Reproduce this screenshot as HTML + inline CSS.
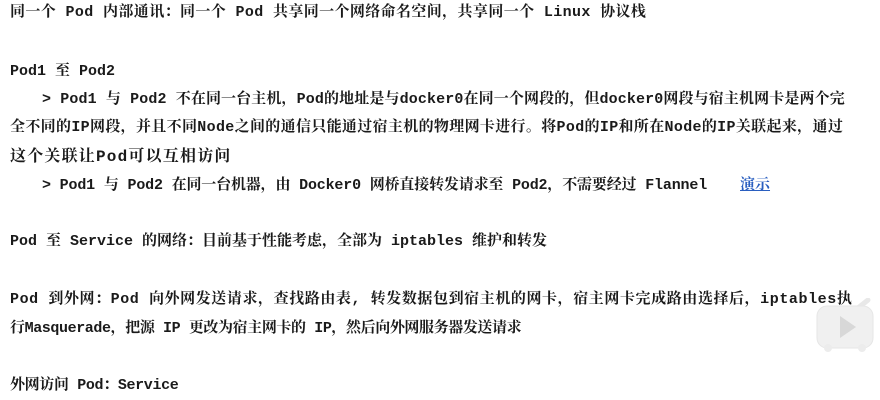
<!DOCTYPE html>
<html><head><meta charset="utf-8"><style>
body{margin:0;width:880px;height:400px;background:#fff;overflow:hidden;position:relative;}
.l{position:absolute;left:10px;white-space:nowrap;font-family:"Liberation Mono","Noto Serif CJK SC",serif;font-size:15px;color:#1a1a1a;font-weight:bold;line-height:20px;}
.i{left:42px}
a{color:#2a5fc0;text-decoration:underline;position:absolute;left:698px;top:0;letter-spacing:0}
</style></head><body>
<div class="l" style="top:3px;letter-spacing:0.38px">同一个 Pod 内部通讯：同一个 Pod 共享同一个网络命名空间，共享同一个 Linux 协议栈</div>
<div class="l" style="top:62px">Pod1 至 Pod2</div>
<div class="l i" style="top:90px;letter-spacing:0.12px">&gt; Pod1 与 Pod2 不在同一台主机，Pod的地址是与docker0在同一个网段的，但docker0网段与宿主机网卡是两个完</div>
<div class="l" style="top:118px;letter-spacing:0.33px">全不同的IP网段，并且不同Node之间的通信只能通过宿主机的物理网卡进行。将Pod的IP和所在Node的IP关联起来，通过</div>
<div class="l" style="top:147px;font-size:16px;letter-spacing:1.2px">这个关联让Pod可以互相访问</div>
<div class="l i" style="top:176px;letter-spacing:-0.17px">&gt; Pod1 与 Pod2 在同一台机器，由 Docker0 网桥直接转发请求至 Pod2，不需要经过 Flannel<a>演示</a></div>
<div class="l" style="top:232px">Pod 至 Service 的网络：目前基于性能考虑，全部为 iptables 维护和转发</div>
<div class="l" style="top:290px;letter-spacing:0.58px">Pod 到外网：Pod 向外网发送请求，查找路由表, 转发数据包到宿主机的网卡，宿主网卡完成路由选择后，iptables执</div>
<div class="l" style="top:319px;letter-spacing:-0.4px">行Masquerade，把源 IP 更改为宿主网卡的 IP，然后向外网服务器发送请求</div>
<div class="l" style="top:376px;letter-spacing:-0.35px">外网访问 Pod：Service</div>
<svg style="position:absolute;left:814px;top:298px" width="62" height="56" viewBox="0 0 62 56">
<path d="M44 10 L54 2" stroke="#e8e8e8" stroke-width="5" stroke-linecap="round"/>
<rect x="3" y="8" width="56" height="42" rx="10" fill="#f0f0f0" stroke="#e6e6e6"/>
<circle cx="14" cy="50" r="4" fill="#ececec"/><circle cx="48" cy="50" r="4" fill="#ececec"/>
<path d="M26 18 L26 40 L42 29 Z" fill="#d8d8d8"/>
</svg>
</body></html>
